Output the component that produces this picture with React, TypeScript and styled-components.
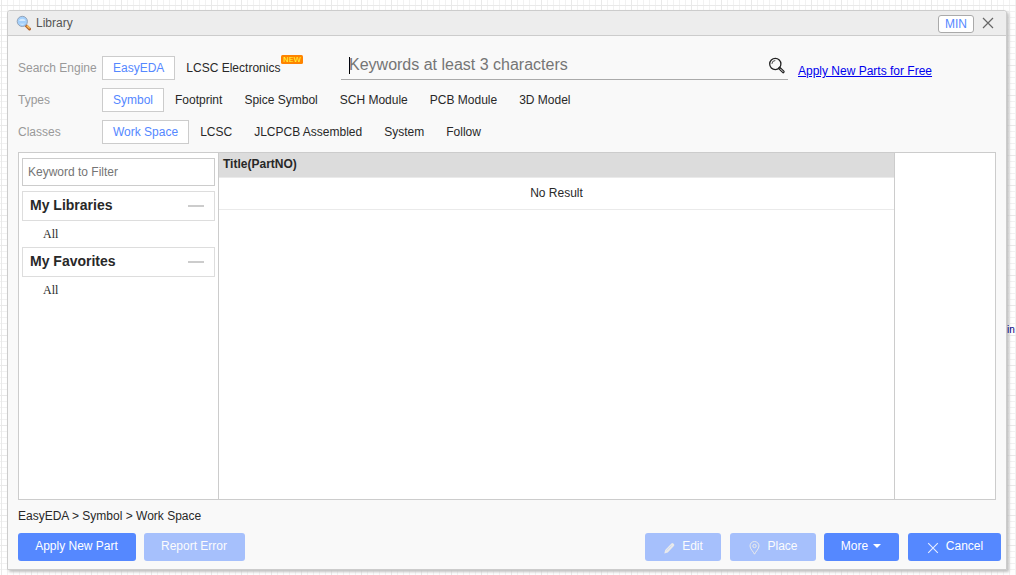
import React from "react";
import styled, { createGlobalStyle } from "styled-components";

const GlobalStyle = createGlobalStyle`
  *, *::before, *::after { box-sizing: border-box; }
  body {
    margin: 0;
    overflow: hidden;
    font: 12px/16px "Liberation Sans", Arial, sans-serif;
    color: #282828;
  }
`;

const Canvas = styled.div`
  position: relative;
  width: 1016px;
  height: 575px;
  padding: 10px 0 0 7px;
  overflow: hidden;
  background-color: #fff;
  background-image:
    linear-gradient(to right, #e9e9e9 1px, transparent 1px),
    linear-gradient(to bottom, #e9e9e9 1px, transparent 1px),
    linear-gradient(to right, #f2f2f2 1px, transparent 1px),
    linear-gradient(to bottom, #f2f2f2 1px, transparent 1px);
  background-size: 30px 30px, 30px 30px, 6px 6px, 6px 6px;
  background-position: 1px 0, 0 5px, 1px 0, 0 5px;
`;

const PinLabel = styled.span`
  position: absolute;
  left: 1007px;
  top: 324px;
  font-size: 10px;
  line-height: 12px;
  color: #000080;
`;

const Dialog = styled.div`
  position: relative;
  display: flex;
  flex-direction: column;
  width: 1000px;
  height: 560px;
  border: 1px solid #ccc;
  border-radius: 3px 3px 0 0;
  background: #f9f9f9;
  box-shadow: 2px 2px 3px #c0c0c0;
`;

const TitleBar = styled.header`
  display: flex;
  align-items: center;
  height: 25px;
  padding: 0 12px 0 8px;
  border-bottom: 1px solid #ccc;
  border-radius: 3px 3px 0 0;
  background: #ededed;
`;

const Title = styled.span`
  flex: 1;
  margin-left: 4px;
  color: #555;
`;

const MinButton = styled.button`
  width: 36px;
  height: 18px;
  margin: 1px 8px 0 0;
  padding: 0;
  border: 1px solid #aaa;
  border-radius: 3px;
  background: #fff;
  color: #58f;
  font: 12px/16px "Liberation Sans", Arial, sans-serif;
`;

const Filters = styled.section`
  display: flex;
  padding: 20px 10px 8px;
`;

const FilterRows = styled.div`
  display: flex;
  flex-direction: column;
  gap: 8px;
  width: 323px;
  flex: none;
`;

const FilterRow = styled.div`
  display: flex;
  align-items: center;
  height: 24px;
  white-space: nowrap;
`;

const FilterLabel = styled.span`
  width: 84px;
  flex: none;
  color: #999;
`;

const Tab = styled.span<{ $active?: boolean }>`
  position: relative;
  flex: none;
  height: 24px;
  padding: 0 10px;
  border: 1px solid ${(p) => (p.$active ? "#ccc" : "transparent")};
  background: ${(p) => (p.$active ? "#fff" : "transparent")};
  color: ${(p) => (p.$active ? "#58f" : "#282828")};
  line-height: 22px;
`;

const NewBadge = styled.svg`
  position: absolute;
  left: calc(100% - 9px);
  top: -2px;
  width: 22px;
  height: 9px;
`;

const SearchBox = styled.div`
  display: flex;
  align-items: center;
  width: 447px;
  height: 28px;
  margin-top: -4px;
  padding: 0 2px 0 8px;
  border-bottom: 1px solid #aaa;
  color: #757575;
  font-size: 16px;
`;

const Caret = styled.i`
  width: 1px;
  height: 17px;
  margin-right: -1px;
  background: #000;
`;

const SearchHint = styled.span`
  flex: 1;
  margin-top: -2px;
`;

const ApplyLink = styled.a`
  height: 16px;
  margin: 7px 0 0 10px;
  color: #0000ee;
  text-decoration: underline;
`;

const Panel = styled.main`
  display: grid;
  grid-template-columns: 200px 676px 1fr;
  width: 978px;
  height: 348px;
  margin-left: 10px;
  border: 1px solid #ccc;
  background: #fff;
`;

const Sidebar = styled.aside`
  padding: 5px 3px;
  border-right: 1px solid #ccc;
`;

const FilterInput = styled.input`
  display: block;
  width: 193px;
  height: 28px;
  margin-bottom: 5px;
  padding: 0 5px;
  border: 1px solid #ccc;
  border-radius: 0;
  outline: 0;
  font: 12px "Liberation Sans", Arial, sans-serif;
  &::placeholder { color: #757575; }
`;

const GroupHeader = styled.div`
  display: flex;
  align-items: center;
  justify-content: space-between;
  width: 193px;
  height: 30px;
  padding: 0 10px 2px 7px;
  border: 1px solid #ddd;
  font-size: 14px;
  font-weight: bold;
`;

const Collapse = styled.i`
  width: 16px;
  height: 2px;
  margin-top: 2px;
  background: #ccc;
`;

const GroupItem = styled.div`
  height: 26px;
  padding-left: 21px;
  font: 12px/26px "Liberation Serif", "Times New Roman", serif;
`;

const Results = styled.section`
  border-right: 1px solid #ccc;
`;

const ResultsHeader = styled.div`
  height: 25px;
  padding: 0 4px;
  border-bottom: 1px solid #eaeaea;
  background: #dcdcdc;
  font-weight: bold;
  line-height: 23px;
`;

const EmptyRow = styled.div`
  height: 32px;
  border-bottom: 1px solid #eaeaea;
  line-height: 31px;
  text-align: center;
`;

const Breadcrumb = styled.div`
  height: 33px;
  padding: 8px 10px 0;
`;

const Footer = styled.footer`
  display: flex;
  padding: 0 5px 0 10px;
`;

const Button = styled.button<{ $width: number; $gap?: number; $disabled?: boolean }>`
  display: flex;
  align-items: center;
  justify-content: center;
  width: ${(p) => p.$width}px;
  height: 28px;
  margin: 0 ${(p) => p.$gap ?? 0}px 0 0;
  padding: 0 1px 2px 0;
  border: 0;
  border-radius: 3px;
  background: #58f;
  color: #fff;
  opacity: ${(p) => (p.$disabled ? 0.5 : 1)};
  font: 12px/16px "Liberation Sans", Arial, sans-serif;
  svg { flex: none; }
`;

const Spacer = styled.div`
  flex: 1;
`;

const IconSlot = styled.span<{ $gap: number }>`
  display: flex;
  margin: 3px ${(p) => p.$gap}px 0 2px;
`;

const DropArrow = styled.i`
  margin-left: 5px;
  border: 4px solid transparent;
  border-top-color: #fff;
  border-bottom: 0;
`;

const LibraryIcon = () => (
  <svg width="16" height="16" viewBox="0 0 16 16">
    <path d="M10 10.5 13.5 14" stroke="#b3622a" strokeWidth="3" strokeLinecap="round" />
    <path d="M10.8 10.6 13.7 13.5" stroke="#f6bd5c" strokeWidth="1.6" />
    <circle cx="6.3" cy="6.4" r="5.1" fill="#a4d0fb" stroke="#93a3b8" />
    <path d="M3 6a3.4 3 0 0 1 6.6 0" fill="#d4ebff" />
    <path d="M3.6 8.8q2.7 1.8 5.4 0" fill="#d9efff" />
  </svg>
);

const CloseIcon = () => (
  <svg width="12" height="12" viewBox="0 0 12 12" fill="none" stroke="#666" strokeWidth="1.2">
    <path d="m1 1 10 10M11 1 1 11" />
  </svg>
);

const SearchIcon = () => (
  <svg width="18" height="18" viewBox="0 0 18 18" fill="none" stroke="#222">
    <circle cx="7.3" cy="7" r="5.6" strokeWidth="1.3" />
    <path d="M3.9 6.9a3.5 3.5 0 0 1 3.4-3.4" strokeWidth=".8" />
    <path d="m11.6 11.2 3.6 3.6" strokeWidth="3" strokeLinecap="round" />
    <path d="m12.4 12 2.6 2.6" stroke="#eee" strokeWidth="1" strokeLinecap="round" />
  </svg>
);

const PencilIcon = () => (
  <svg width="11" height="12" viewBox="0 0 11 12" fill="#ddd">
    <path d="M.3 11.5 1.2 8 7.4 1.4Q8.3.5 9.3 1.4l.6.6q.9.9 0 1.9L3.8 10.4Z" />
    <path d="m2.6 8.6 5-5.2" stroke="#8fadf5" strokeWidth=".7" />
  </svg>
);

const PinIcon = () => (
  <svg width="11" height="14" viewBox="0 0 11 14" fill="none" stroke="#ddd" strokeWidth="1">
    <path d="M5.5 13.2C4.4 10.7 1 7.8 1 5a4.5 4.5 0 0 1 9 0c0 2.8-3.4 5.7-4.5 8.2Z" />
    <circle cx="5.5" cy="5" r="1.7" />
  </svg>
);

const CancelIcon = () => (
  <svg width="12" height="12" viewBox="0 0 12 12" fill="none" stroke="#e8eeff" strokeWidth="1.1">
    <path d="m1.2 1.2 9.6 9.6M10.8 1.2l-9.6 9.6" />
  </svg>
);

const types = ["Symbol", "Footprint", "Spice Symbol", "SCH Module", "PCB Module", "3D Model"];
const classes = ["Work Space", "LCSC", "JLCPCB Assembled", "System", "Follow"];

const TabRow = ({ label, items }: { label: string; items: string[] }) => (
  <FilterRow>
    <FilterLabel>{label}</FilterLabel>
    {items.map((item, i) => (
      <Tab key={item} $active={i === 0}>{item}</Tab>
    ))}
  </FilterRow>
);

export default function App() {
  return (
    <>
      <GlobalStyle />
      <Canvas>
        <Dialog>
          <TitleBar>
            <LibraryIcon />
            <Title>Library</Title>
            <MinButton>MIN</MinButton>
            <CloseIcon />
          </TitleBar>
          <Filters>
            <FilterRows>
              <FilterRow>
                <FilterLabel>Search Engine</FilterLabel>
                <Tab $active>EasyEDA</Tab>
                <Tab>
                  LCSC Electronics
                  <NewBadge viewBox="0 0 22 9">
                    <rect width="22" height="9" rx="1.5" fill="#ff8400" />
                    <text
                      x="2"
                      y="7"
                      textLength="18"
                      lengthAdjust="spacingAndGlyphs"
                      fill="#ffff40"
                      fontFamily="DejaVu Sans"
                      fontSize="7"
                    >
                      NEW
                    </text>
                  </NewBadge>
                </Tab>
              </FilterRow>
              <TabRow label="Types" items={types} />
              <TabRow label="Classes" items={classes} />
            </FilterRows>
            <SearchBox>
              <Caret />
              <SearchHint>Keywords at least 3 characters</SearchHint>
              <SearchIcon />
            </SearchBox>
            <ApplyLink>Apply New Parts for Free</ApplyLink>
          </Filters>
          <Panel>
            <Sidebar>
              <FilterInput placeholder="Keyword to Filter" />
              <GroupHeader>My Libraries<Collapse /></GroupHeader>
              <GroupItem>All</GroupItem>
              <GroupHeader>My Favorites<Collapse /></GroupHeader>
              <GroupItem>All</GroupItem>
            </Sidebar>
            <Results>
              <ResultsHeader>Title(PartNO)</ResultsHeader>
              <EmptyRow>No Result</EmptyRow>
            </Results>
          </Panel>
          <Breadcrumb>EasyEDA &gt; Symbol &gt; Work Space</Breadcrumb>
          <Footer>
            <Button $width={118} $gap={8}>Apply New Part</Button>
            <Button $width={101} $disabled>Report Error</Button>
            <Spacer />
            <Button $width={76} $gap={9} $disabled>
              <IconSlot $gap={7}><PencilIcon /></IconSlot>Edit
            </Button>
            <Button $width={86} $gap={8} $disabled>
              <IconSlot $gap={7}><PinIcon /></IconSlot>Place
            </Button>
            <Button $width={75} $gap={9}>More<DropArrow /></Button>
            <Button $width={93}>
              <IconSlot $gap={7}><CancelIcon /></IconSlot>Cancel
            </Button>
          </Footer>
        </Dialog>
        <PinLabel>in</PinLabel>
      </Canvas>
    </>
  );
}
